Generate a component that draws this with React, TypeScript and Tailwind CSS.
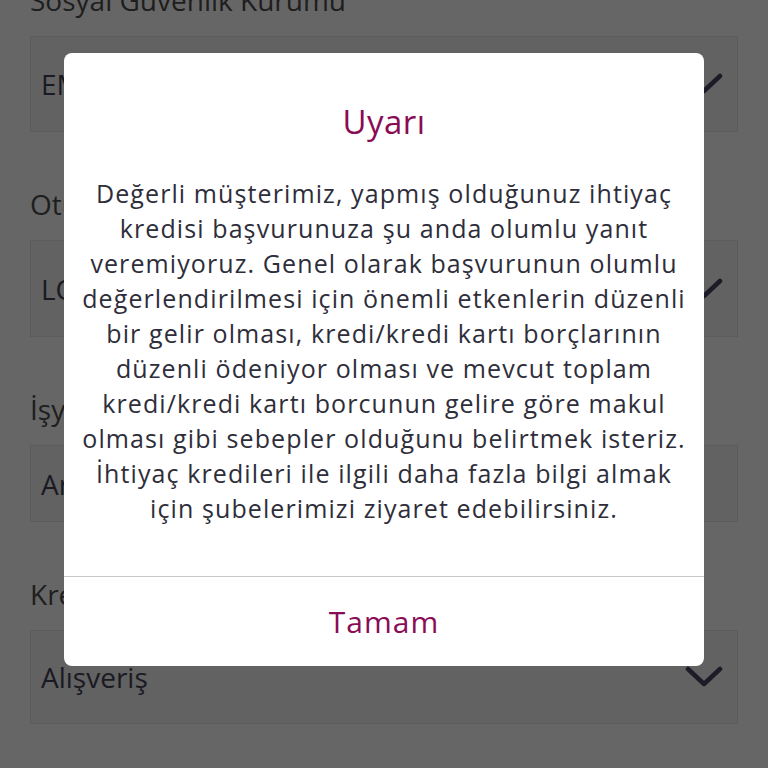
const lines = [
  "Değerli müşterimiz, yapmış olduğunuz ihtiyaç",
  "kredisi başvurunuza şu anda olumlu yanıt",
  "veremiyoruz. Genel olarak başvurunun olumlu",
  "değerlendirilmesi için önemli etkenlerin düzenli",
  "bir gelir olması, kredi/kredi kartı borçlarının",
  "düzenli ödeniyor olması ve mevcut toplam",
  "kredi/kredi kartı borcunun gelire göre makul",
  "olması gibi sebepler olduğunu belirtmek isteriz.",
  "İhtiyaç kredileri ile ilgili daha fazla bilgi almak",
  "için şubelerimizi ziyaret edebilirsiniz.",
];

function Chevron() {
  return (
    <svg width="38" height="26" viewBox="0 0 38 26" fill="none">
      <path d="M3 5 L19 20 L35 5" stroke="#1c1c28" strokeWidth="4.5" strokeLinecap="round" strokeLinejoin="round" />
    </svg>
  );
}

function Field({ label, value, h }: { label: string; value: string; h: string }) {
  return (
    <div className="mt-[52px] first:mt-0">
      <div className="h-[40px] leading-[40px] text-[28px] text-[#1e1e1e]">{label}</div>
      <div className={`mt-[16px] ${h} bg-[#626262] border border-[#5c5c5c] flex items-center justify-between pl-[10px] pr-[14px]`}>
        <span className="text-[28px] text-[#1a1a22]">{value}</span>
        <Chevron />
      </div>
    </div>
  );
}

export default function App() {
  return (
    <div className="relative w-[768px] h-[768px] overflow-hidden bg-[#666666]" style={{ fontFamily: '"Open Sans", "Noto Sans", sans-serif' }}>
      <div className="px-[30px] mt-[-20px]">
        <Field label="Sosyal Güvenlik Kurumu" value="EMEKLİ SANDIĞI" h="h-[96px]" />
        <Field label="Oturduğunuz Ev" value="LOJMAN" h="h-[97px]" />
        <div className="mt-[52px]">
          <div className="h-[40px] leading-[40px] text-[28px] text-[#1e1e1e]">İşyeri Adı</div>
          <div className="mt-[16px] h-[77px] bg-[#626262] border border-[#5c5c5c] flex items-center pl-[10px]">
            <span className="text-[28px] text-[#1a1a22]">Ankara</span>
          </div>
        </div>
        <Field label="Kredi Kullanım Amacı" value="Alışveriş" h="h-[94px]" />
      </div>

      <div className="absolute inset-0 flex justify-center pt-[53px]">
        <div className="w-[640px] h-[613px] bg-white rounded-[8px] flex flex-col overflow-hidden">
          <div className="pt-[49px] h-[40px] box-content leading-[40px] text-center text-[33px] tracking-[0.5px] text-[#8a0c55]">Uyarı</div>
          <div className="mt-[34px] text-center text-[25px] tracking-[1.1px] leading-[35px] text-[#2e2e3a]">
            {lines.map((l) => (
              <div key={l} className="whitespace-nowrap">{l}</div>
            ))}
          </div>
          <div className="mt-auto border-t border-[#c8c8c8] h-[90px] flex items-center justify-center text-[30px] tracking-[1px] text-[#8a0c55]">
            Tamam
          </div>
        </div>
      </div>
    </div>
  );
}
